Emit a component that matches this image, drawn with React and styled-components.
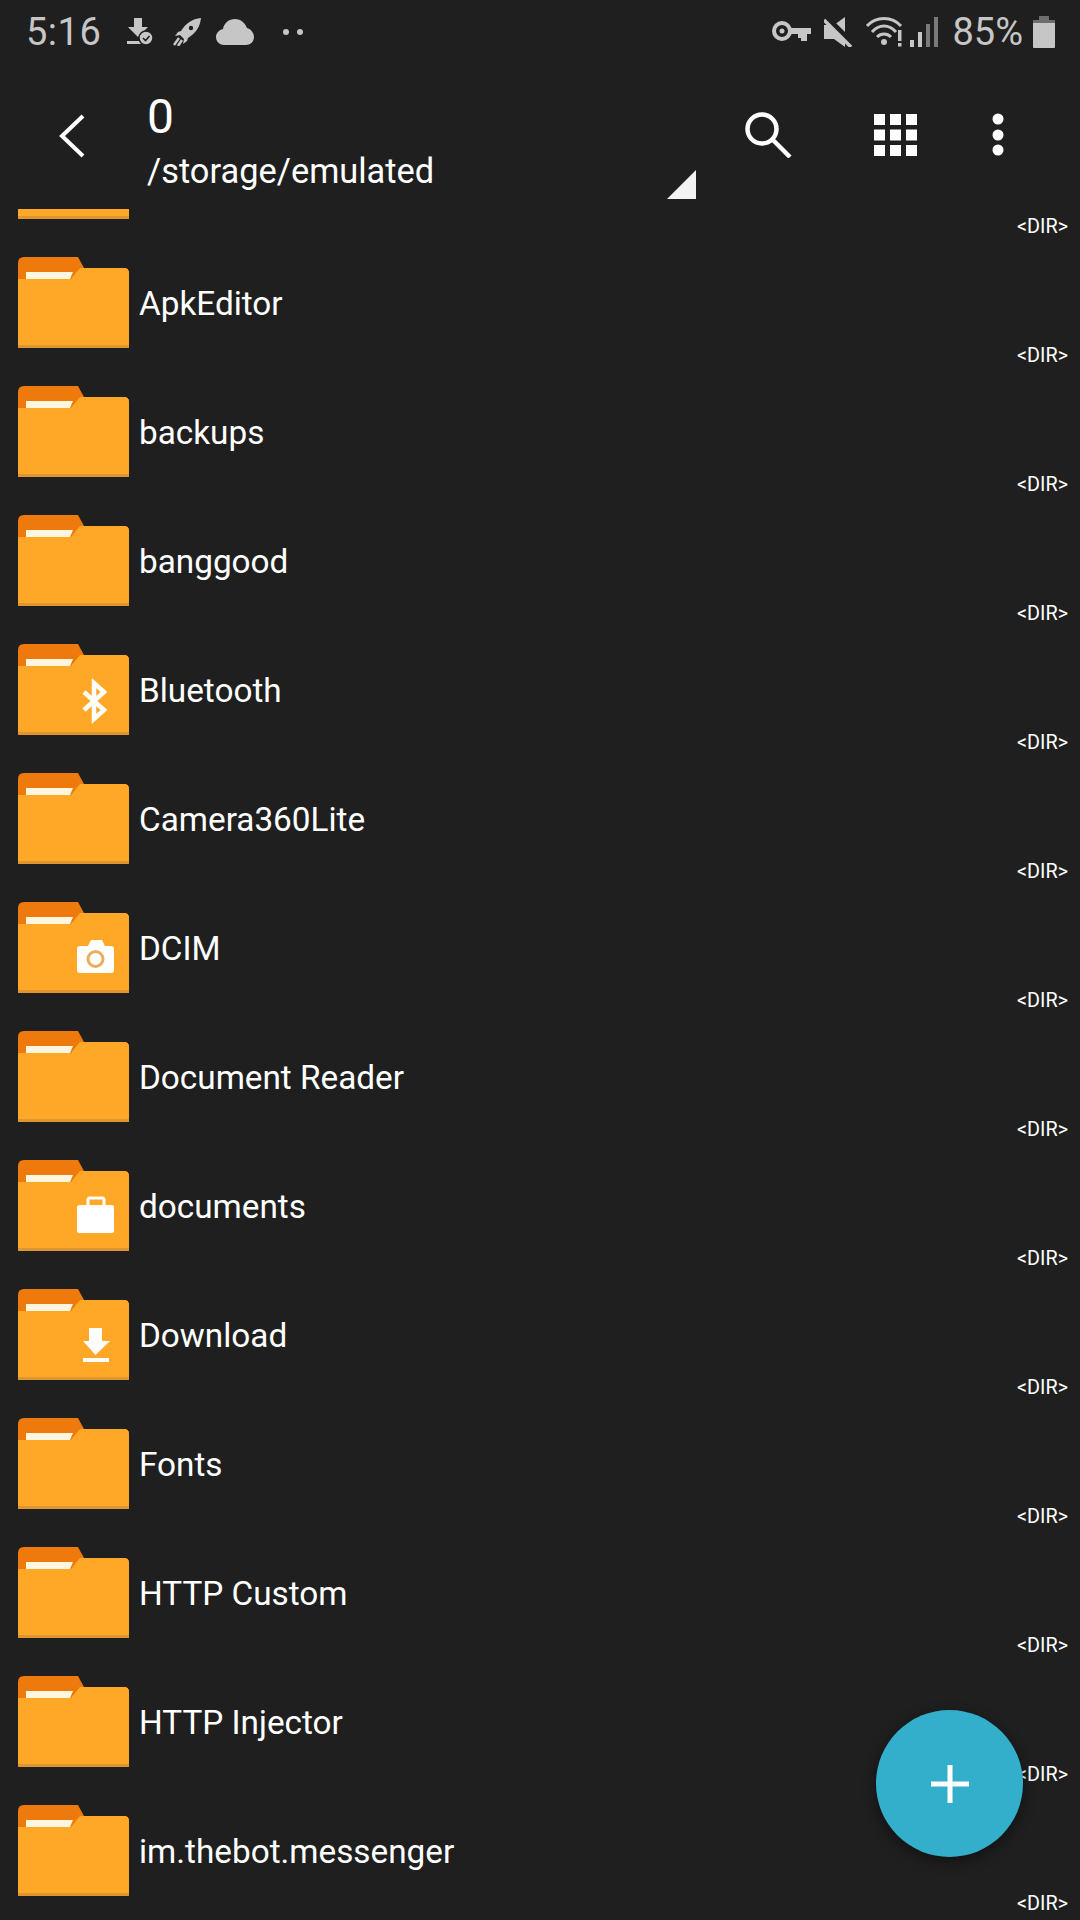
import styled, { createGlobalStyle } from 'styled-components';

const GlobalStyle = createGlobalStyle`
    html, body {
        margin: 0;
        padding: 0;
        background: #1f1f1f;
    }
`;

const Screen = styled.div`
    position: relative;
    width: 1080px;
    height: 1920px;
    display: flex;
    flex-direction: column;
    overflow: hidden;
    background: #1f1f1f;
    font-family: Roboto, 'Liberation Sans', sans-serif;
`;

const StatusBar = styled.div`
    height: 64px;
    flex: none;
    display: flex;
    align-items: center;
    padding: 0 25px 0 26px;
    color: #c6c6c6;
`;

const StatusText = styled.span`
    font-size: 38px;
    line-height: 64px;
    letter-spacing: ${(p) => p.$spacing || '0'};
    margin-left: ${(p) => p.$left || 0}px;
`;

const StatusIcons = styled.div`
    display: flex;
    align-items: center;
    margin-left: ${(p) => p.$left || '0'};
    gap: ${(p) => p.$gap || '0'};
`;

const StatusIcon = styled.svg`
    flex: none;
    margin-left: ${(p) => p.$left || 0}px;
`;

const Spacer = styled.div`
    flex: 1;
`;

const Toolbar = styled.div`
    position: relative;
    height: 145px;
    flex: none;
    display: flex;
    align-items: center;
    padding-left: 58px;
    color: #fff;
`;

const BackIcon = styled.svg`
    width: 28px;
    height: 44px;
    margin-top: -1px;
    flex: none;
`;

const Titles = styled.div`
    margin: 8px 0 0 61px;
    flex: 1;
    display: flex;
    flex-direction: column;
`;

const Title = styled.div`
    font-size: 48px;
    line-height: 56px;
`;

const Subtitle = styled.div`
    font-size: 34.4px;
    line-height: 42px;
    margin-top: 5px;
`;

const SpinnerArrow = styled.div`
    position: absolute;
    left: 667px;
    top: 106px;
    width: 29px;
    height: 29px;
    background: #f2f2f2;
    clip-path: polygon(100% 0, 100% 100%, 0 100%);
`;

const Actions = styled.div`
    display: flex;
    align-items: center;
    padding-right: 76px;
    margin-top: -3px;
`;

const ActionIcon = styled.svg`
    width: ${(p) => p.$w}px;
    height: 46px;
    margin-left: ${(p) => p.$left}px;
    flex: none;
`;

const List = styled.div`
    flex: 1;
    overflow: hidden;
`;

const ScrollContent = styled.div`
    margin-top: -94px;
`;

const Row = styled.div`
    height: 129px;
    display: flex;
    align-items: flex-start;
    padding: 0 12px 0 18px;
    color: #fff;
`;

const FolderIcon = styled.svg`
    width: 111px;
    height: 94px;
    margin-top: 13px;
    flex: none;
`;

const Name = styled.div`
    flex: 1;
    margin: 38px 0 0 10px;
    font-size: 33.3px;
    line-height: 44px;
`;

const Dir = styled.div`
    align-self: flex-end;
    margin-bottom: 5px;
    font-size: 19.8px;
    line-height: 24px;
`;

const Fab = styled.button`
    position: absolute;
    left: 876px;
    top: 1710px;
    width: 147px;
    height: 147px;
    padding: 0;
    border: none;
    border-radius: 50%;
    background: #33aecb;
    box-shadow: 0 4px 14px rgba(0, 0, 0, 0.45);
    display: flex;
    align-items: center;
    justify-content: center;
`;

const badges = {
    bluetooth: (
        <path
            d="M66 48 L86 66 L76 75 V39 L86 48 L66 66"
            fill="none"
            stroke="#fff"
            strokeWidth="4.5"
        />
    ),
    camera: (
        <>
            <path
                d="M62 44 H70 L73 38 H84 L87 44 H93 Q96 44 96 47 V68 Q96 71 93 71 H62 Q59 71 59 68 V47 Q59 44 62 44 Z"
                fill="#fff"
            />
            <circle cx="77.5" cy="57" r="7.5" fill="none" stroke="#e9ae5a" strokeWidth="3" />
        </>
    ),
    work: (
        <>
            <path
                d="M62 45 H94 Q96 45 96 47 V71 Q96 73 94 73 H62 Q59 73 59 71 V47 Q59 45 62 45 Z"
                fill="#fff"
            />
            <path d="M70 45 V40 Q70 38 72 38 H84 Q86 38 86 40 V45" fill="none" stroke="#fff" strokeWidth="3" />
        </>
    ),
    download: (
        <>
            <path d="M71 39 H84 V52 H92 L77.5 66 L65 52 H71 Z" fill="#fff" />
            <rect x="65" y="69" width="26" height="4" fill="#fff" />
        </>
    ),
};

function Folder({ badge }) {
    return (
        <FolderIcon viewBox="0 0 111 94">
            <path
                d="M0 6 Q0 0 6 0 H60 L66 11 H106 Q111 11 111 16 V40 H0 Z"
                fill="#ee7a0d"
            />
            <path d="M8 15 H55 L52 22 H8 Z" fill="#fff6df" />
            <path
                d="M0 22 H53 L62 11 H106 Q111 11 111 16 V88 H0 Z"
                fill="#ffa726"
            />
            <rect x="0" y="88" width="111" height="3" fill="#dd9632" />
            {badge && badges[badge]}
        </FolderIcon>
    );
}

// first row is scrolled under the toolbar, only the bottom of its folder shows
const folders = [
    { name: '' },
    { name: 'ApkEditor' },
    { name: 'backups' },
    { name: 'banggood' },
    { name: 'Bluetooth', badge: 'bluetooth' },
    { name: 'Camera360Lite' },
    { name: 'DCIM', badge: 'camera' },
    { name: 'Document Reader' },
    { name: 'documents', badge: 'work' },
    { name: 'Download', badge: 'download' },
    { name: 'Fonts' },
    { name: 'HTTP Custom' },
    { name: 'HTTP Injector' },
    { name: 'im.thebot.messenger' },
];

export default function App() {
    return (
        <Screen>
            <GlobalStyle />
            <StatusBar>
                <StatusText $spacing="0.5px">5:16</StatusText>
                <StatusIcons $left="26px" $gap="20px">
                    <svg width="26" height="28" viewBox="0 0 26 28">
                        <path d="M7 0 H15 V9 H21 L11 19 L1 9 H7 Z" fill="#c6c6c6" />
                        <rect x="0" y="23" width="17" height="3" fill="#c6c6c6" />
                        <circle cx="19" cy="20" r="7" fill="#c6c6c6" stroke="#1f1f1f" strokeWidth="1.5" />
                        <path d="M16 20 L18.5 22.5 L22.5 18" fill="none" stroke="#1f1f1f" strokeWidth="1.6" />
                    </svg>
                    <svg width="28" height="28" viewBox="0 0 28 28">
                        <path d="M28 0 C19 1 13 5 8 13 L5 14 L2 18 L7 17 L11 21 L10 26 L14 23 L15 20 C23 15 27 9 28 0 Z" fill="#c6c6c6" />
                        <circle cx="18" cy="10" r="2.2" fill="#1f1f1f" />
                        <path d="M6 20 L1 27 M9 22 L5 28" stroke="#c6c6c6" strokeWidth="2.5" />
                    </svg>
                    <StatusIcon $left={-5} width="38" height="26" viewBox="0 0 38 26">
                        <path d="M8 26 C3 26 0 22 0 18 C0 14 3 11 7 10 C8 4 13 0 19 0 C25 0 29 4 31 9 C35 10 38 14 38 18 C38 23 34 26 30 26 Z" fill="#c6c6c6" />
                    </StatusIcon>
                    <StatusIcon $left={8} width="22" height="8" viewBox="0 0 22 8">
                        <circle cx="4" cy="4" r="3" fill="#c6c6c6" />
                        <circle cx="18" cy="4" r="3" fill="#c6c6c6" />
                    </StatusIcon>
                </StatusIcons>
                <Spacer />
                <StatusIcons $gap="12px">
                    <svg width="39" height="22" viewBox="0 0 39 22">
                        <circle cx="10" cy="10" r="8" fill="none" stroke="#c6c6c6" strokeWidth="4" />
                        <circle cx="10" cy="10" r="2.5" fill="#c6c6c6" />
                        <path d="M18 7 H39 V13 H35 V20 H29 V17 H26 V13 H18 Z" fill="#c6c6c6" />
                    </svg>
                    <StatusIcon $left={1} width="30" height="30" viewBox="0 0 30 30">
                        <path d="M0 8 H10 L21 0 V30 L10 22 H0 Z" fill="#c6c6c6" />
                        <path d="M1 0 L29 28" stroke="#1f1f1f" strokeWidth="7" />
                        <path d="M0 3 L27 30" stroke="#c6c6c6" strokeWidth="3.5" />
                    </StatusIcon>
                    <StatusIcon $left={0} width="38" height="30" viewBox="0 0 38 30">
                        <path d="M1 9 C10 -1 26 -1 35 9 M6 15 C13 7 23 7 30 15 M11 20 C15 16 21 16 25 20" fill="none" stroke="#c6c6c6" strokeWidth="3" />
                        <circle cx="18" cy="25" r="3" fill="#c6c6c6" />
                        <rect x="32" y="13" width="3.5" height="11" fill="#c6c6c6" />
                        <rect x="32" y="26" width="3.5" height="3.5" fill="#c6c6c6" />
                    </StatusIcon>
                    <StatusIcon $left={-7} width="30" height="30" viewBox="0 0 30 30">
                        <rect x="1" y="23" width="4" height="7" fill="#c6c6c6" />
                        <rect x="9" y="15" width="4" height="15" fill="#c6c6c6" />
                        <rect x="17" y="7" width="4" height="23" fill="#7a7a7a" />
                        <rect x="25" y="0" width="4" height="30" fill="#7a7a7a" />
                    </StatusIcon>
                    <StatusText $left={1}>85%</StatusText>
                    <StatusIcon $left={-2} width="22" height="32" viewBox="0 0 22 32">
                        <path d="M6 0 H16 V4 H21 Q22 4 22 5 V31 Q22 32 21 32 H1 Q0 32 0 31 V5 Q0 4 1 4 H6 Z" fill="#c6c6c6" />
                        <path d="M6 0 H16 V4 H22 V7 H0 V4 H6 Z" fill="#6e6e6e" />
                    </StatusIcon>
                </StatusIcons>
            </StatusBar>

            <Toolbar>
                <BackIcon viewBox="0 0 28 44">
                    <path d="M25 2 L4 22 L25 42" fill="none" stroke="#fff" strokeWidth="4" />
                </BackIcon>
                <Titles>
                    <Title>0</Title>
                    <Subtitle>/storage/emulated</Subtitle>
                </Titles>
                <SpinnerArrow />
                <Actions>
                    <ActionIcon $w={47} $left={0} viewBox="0 0 47 46">
                        <circle cx="17" cy="17" r="14.5" fill="none" stroke="#fff" strokeWidth="4.5" />
                        <path d="M27 27 L45 45" stroke="#fff" strokeWidth="4.5" />
                    </ActionIcon>
                    <ActionIcon $w={43} $left={82} viewBox="0 0 43 46">
                        {[2, 17.5, 33].map((y) =>
                            [0, 16, 32].map((x) => (
                                <rect key={`${x}-${y}`} x={x} y={y} width="11" height="11" fill="#fff" />
                            ))
                        )}
                    </ActionIcon>
                    <ActionIcon $w={12} $left={75} viewBox="0 0 12 46">
                        <circle cx="6" cy="7" r="5.5" fill="#fff" />
                        <circle cx="6" cy="23" r="5.5" fill="#fff" />
                        <circle cx="6" cy="38" r="5.5" fill="#fff" />
                    </ActionIcon>
                </Actions>
            </Toolbar>

            <List>
                <ScrollContent>
                    {folders.map((f) => (
                        <Row key={f.name}>
                            <Folder badge={f.badge} />
                            <Name>{f.name}</Name>
                            <Dir>&lt;DIR&gt;</Dir>
                        </Row>
                    ))}
                </ScrollContent>
            </List>

            <Fab>
                <svg width="38" height="38" viewBox="0 0 38 38">
                    <path d="M19 0 V38 M0 19 H38" stroke="#fff" strokeWidth="5" />
                </svg>
            </Fab>
        </Screen>
    );
}
